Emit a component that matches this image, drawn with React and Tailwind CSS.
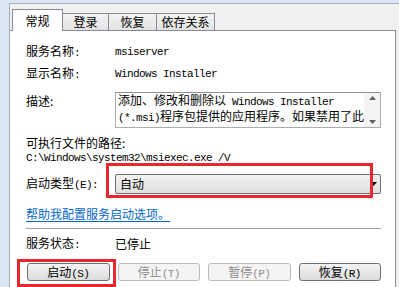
import React from "react";

const CJK = "font-['Noto_Sans_CJK_SC','Noto_Sans',sans-serif]";
const MONO = "font-['Liberation_Mono',monospace] text-[11px] tracking-[-0.6px]";

// mixed text: ascii runs get the half-width mono look of SimSun
function T({ children }) {
  const parts = String(children).split(/([\x20-\x7e]+)/);
  return parts.map((p, i) =>
    /[\x20-\x7e]/.test(p) ? (
      <span key={i} className={MONO}>
        {p}
      </span>
    ) : (
      p
    )
  );
}

function Row({ label, top, children, h = "h-[16px]" }) {
  return (
    <div className={`flex items-center ${h} ${top}`}>
      <div className="w-[89px] shrink-0 leading-[16px]">
        <T>{label}</T>
      </div>
      {children}
    </div>
  );
}

function Btn({ label, disabled }) {
  return (
    <button
      className={`w-[83px] h-[18px] rounded-[3px] border text-[12px] leading-[16px] ${
        disabled
          ? "border-[#b8bcc0] bg-[#f4f4f4] text-[#8e8e8e]"
          : "border-[#707070] bg-linear-to-b from-[#f4f4f4] to-[#dcdcdc] text-black"
      }`}
    >
      <T>{label}</T>
    </button>
  );
}

export default function App() {
  return (
    <div
      className={`relative w-[399px] h-[287px] overflow-hidden bg-[#dce6f2] pl-[9px] pt-[3px] text-[12px] text-black ${CJK}`}
    >
      <div className="flex flex-col h-full bg-[#f0f0f0] border-l border-t border-[#9fb0c5]">
        {/* tabs */}
        <div className="flex items-end h-[26px] pl-[2px]">
          <div className="relative z-10 -mb-px flex justify-center items-start pt-[4px] w-[51px] h-[22px] bg-white border border-b-0 border-[#898c95] leading-[14px]">
            常规
          </div>
          <div className="-ml-px flex justify-center items-center w-[47px] h-[17px] bg-linear-to-b from-[#f3f3f3] to-[#e3e3e3] border border-b-0 border-[#898c95]">
            登录
          </div>
          <div className="-ml-px flex justify-center items-center w-[49px] h-[17px] bg-linear-to-b from-[#f3f3f3] to-[#e3e3e3] border border-b-0 border-[#898c95]">
            恢复
          </div>
          <div className="-ml-px flex justify-center items-center w-[59px] h-[17px] bg-linear-to-b from-[#f3f3f3] to-[#e3e3e3] border border-b-0 border-[#898c95]">
            依存关系
          </div>
        </div>

        {/* page */}
        <div className="flex-1 mr-[3px] bg-white border-t border-r border-[#898c95] pl-[16px] pr-[14px]">
          <Row label="服务名称:" top="mt-[13px]">
            <span className={MONO}>msiserver</span>
          </Row>
          <Row label="显示名称:" top="mt-[6px]">
            <span className={MONO}>Windows Installer</span>
          </Row>

          <div className="flex items-start mt-[10px] h-[36px]">
            <div className="w-[89px] shrink-0 pt-[1px] leading-[16px]">描述:</div>
            <div className="flex flex-1 h-[36px] border border-[#abadb3] border-t-[#8e8f8f] overflow-hidden">
              <div className="flex-1 pl-[2px] leading-[14px]">
                <div className="whitespace-nowrap">
                  <T>添加、修改和删除以 Windows Installer</T>
                </div>
                <div className="whitespace-nowrap">
                  <T>(*.msi)程序包提供的应用程序。如果禁用了此</T>
                </div>
              </div>
              <div className="flex flex-col justify-between items-center w-[16px] py-[3px] bg-[#f4f4f4]">
                <svg width="7" height="4" viewBox="0 0 7 4">
                  <path d="M0 4 L3.5 0 L7 4 Z" fill="#606060" />
                </svg>
                <svg width="7" height="4" viewBox="0 0 7 4">
                  <path d="M0 0 L3.5 4 L7 0 Z" fill="#606060" />
                </svg>
              </div>
            </div>
          </div>

          <div className="mt-[7px] h-[16px] leading-[16px]">可执行文件的路径:</div>
          <div className={`h-[14px] leading-[14px] whitespace-nowrap ${MONO}`}>
            C:\Windows\system32\msiexec.exe /V
          </div>

          <Row label="启动类型(E):" top="mt-[9px]" h="h-[20px]">
            <div className="flex flex-1 items-center h-[20px] pl-[4px] pr-[3px] rounded-[2px] border border-[#707070] bg-linear-to-b from-[#f2f2f2] to-[#dfdfdf]">
              <span className="flex-1 leading-[16px]">自动</span>
              <svg width="7" height="4" viewBox="0 0 7 4">
                <path d="M0 0 L7 0 L3.5 4 Z" fill="#000" />
              </svg>
            </div>
          </Row>

          <div className="mt-[12px] h-[16px] leading-[16px]">
            <span className="text-[#0066cc] underline underline-offset-2">
              帮助我配置服务启动选项。
            </span>
          </div>

          <div className="mt-[6px] h-px bg-[#a0a0a0]" />

          <Row label="服务状态:" top="mt-[7px]">
            <span className="leading-[16px]">已停止</span>
          </Row>

          <div className="flex gap-[8px] mt-[11px] pl-px">
            <Btn label="启动(S)" />
            <Btn label="停止(T)" disabled />
            <Btn label="暂停(P)" disabled />
            <Btn label="恢复(R)" />
          </div>
        </div>
      </div>

      {/* red highlight boxes */}
      <div className="absolute left-[106px] top-[163px] w-[267px] h-[35px] border-[3px] border-[#e8292b]" />
      <div className="absolute left-[17px] top-[259px] w-[99px] h-[28px] border-[3px] border-[#e8292b]" />
    </div>
  );
}
